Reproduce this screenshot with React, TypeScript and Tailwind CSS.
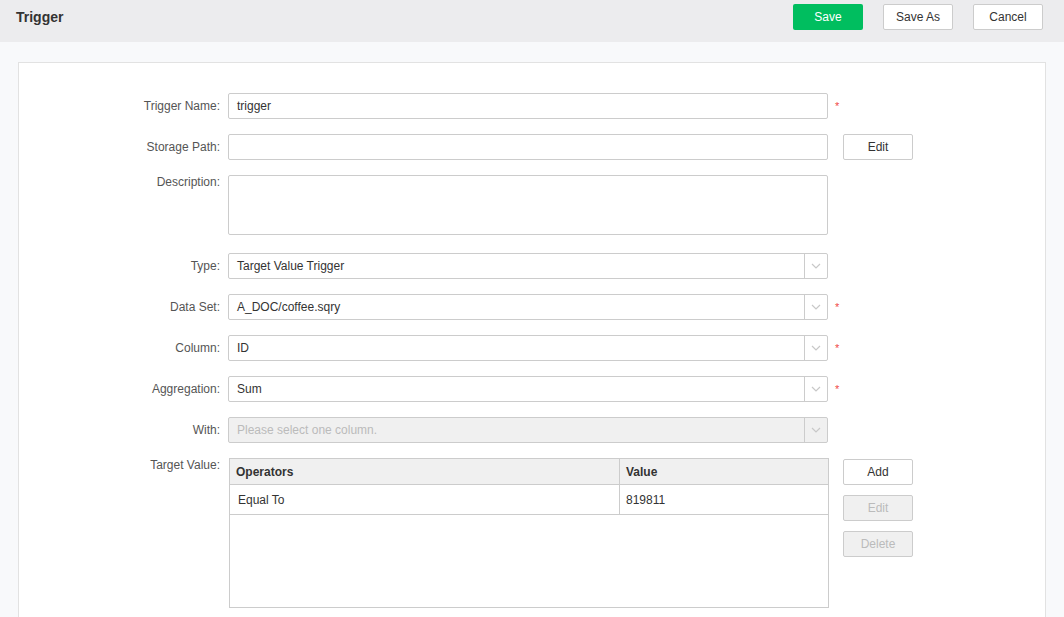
import React from 'react';

const font = { fontFamily: '"Liberation Sans", Arial, sans-serif' };

const Chevron: React.FC = () => (
  <svg width="10" height="6" viewBox="0 0 10 6" fill="none">
    <path d="M1 1l4 4 4-4" stroke="#c8c8c8" strokeWidth="1.2" />
  </svg>
);

const Required: React.FC = () => (
  <span className="ml-[7px] text-[11px] leading-none text-[#f04848]">*</span>
);

const Label: React.FC<{ text: string; top?: boolean }> = ({ text, top }) => (
  <div
    className={`w-[202px] shrink-0 pr-[1px] text-right text-[12px] text-[#555] ${
      top ? 'self-start leading-[14px]' : ''
    }`}
  >
    {text}
  </div>
);

const Select: React.FC<{ value: string; disabled?: boolean }> = ({ value, disabled }) => (
  <div
    className={`ml-[7px] flex h-[26px] w-[600px] items-center rounded-[2px] border border-[#ccc] ${
      disabled ? 'bg-[#f0f0f0]' : 'bg-white'
    }`}
  >
    <div className={`flex-1 pl-[8px] text-[12px] ${disabled ? 'text-[#bbb]' : 'text-[#333]'}`}>
      {value}
    </div>
    <div className="flex h-full w-[23px] items-center justify-center border-l border-[#ccc]">
      <Chevron />
    </div>
  </div>
);

const SideButton: React.FC<{ text: string; disabled?: boolean }> = ({ text, disabled }) => (
  <button
    className={`h-[26px] w-[70px] rounded-[2px] border border-[#ccc] text-[12px] ${
      disabled ? 'bg-[#f0f0f0] text-[#bbb]' : 'bg-white text-[#333]'
    }`}
  >
    {text}
  </button>
);

const App: React.FC = () => {
  return (
    <div className="min-h-screen bg-[#f8f9fb]" style={font}>
      {/* Top bar */}
      <div className="flex h-[42px] items-start bg-[#ececee] pl-[16px] pr-[21px] pt-[4px]">
        <h1 className="flex-1 pt-[4px] text-[14px] font-bold leading-[18px] text-[#333]">Trigger</h1>
        <div className="flex gap-[20px]">
          <button className="h-[26px] w-[70px] rounded-[2px] bg-[#00be5f] text-[12px] text-white">
            Save
          </button>
          <button className="h-[26px] w-[70px] rounded-[2px] border border-[#ccc] bg-white text-[12px] text-[#333]">
            Save As
          </button>
          <button className="h-[26px] w-[70px] rounded-[2px] border border-[#ccc] bg-white text-[12px] text-[#333]">
            Cancel
          </button>
        </div>
      </div>

      <div className="px-[18px] pt-[20px]">
        <div className="border border-[#e2e2e2] bg-white pb-[40px] pt-[30px]">
          {/* Trigger Name */}
          <div className="flex items-center">
            <Label text="Trigger Name:" />
            <div className="ml-[7px] flex h-[26px] w-[600px] items-center rounded-[2px] border border-[#ccc] pl-[8px] text-[12px] text-[#333]">
              trigger
            </div>
            <Required />
          </div>

          {/* Storage Path */}
          <div className="mt-[15px] flex items-center">
            <Label text="Storage Path:" />
            <div className="ml-[7px] h-[26px] w-[600px] rounded-[2px] border border-[#ccc]" />
            <div className="ml-[15px]">
              <SideButton text="Edit" />
            </div>
          </div>

          {/* Description */}
          <div className="mt-[15px] flex">
            <Label text="Description:" top />
            <div className="ml-[7px] h-[60px] w-[600px] rounded-[2px] border border-[#ccc]" />
          </div>

          <div className="mt-[18px] flex items-center">
            <Label text="Type:" />
            <Select value="Target Value Trigger" />
          </div>

          <div className="mt-[15px] flex items-center">
            <Label text="Data Set:" />
            <Select value="A_DOC/coffee.sqry" />
            <Required />
          </div>

          <div className="mt-[15px] flex items-center">
            <Label text="Column:" />
            <Select value="ID" />
            <Required />
          </div>

          <div className="mt-[15px] flex items-center">
            <Label text="Aggregation:" />
            <Select value="Sum" />
            <Required />
          </div>

          <div className="mt-[15px] flex items-center">
            <Label text="With:" />
            <Select value="Please select one column." disabled />
          </div>

          {/* Target Value */}
          <div className="mt-[15px] flex">
            <Label text="Target Value:" top />
            <div className="ml-[8px] h-[150px] w-[600px] border border-[#ccc]">
              <div className="flex h-[26px] border-b border-[#ccc] bg-[#f0f0f0] text-[12px] font-bold text-[#333]">
                <div className="flex w-[390px] items-center border-r border-[#ccc] pl-[6px]">Operators</div>
                <div className="flex flex-1 items-center pl-[6px]">Value</div>
              </div>
              <div className="flex h-[30px] border-b border-[#ccc] text-[12px] text-[#333]">
                <div className="flex w-[390px] items-center border-r border-[#ccc] pl-[8px]">Equal To</div>
                <div className="flex flex-1 items-center pl-[6px]">819811</div>
              </div>
            </div>
            <div className="ml-[14px] flex flex-col gap-[10px] pt-[1px]">
              <SideButton text="Add" />
              <SideButton text="Edit" disabled />
              <SideButton text="Delete" disabled />
            </div>
          </div>
        </div>
      </div>
    </div>
  );
};

export default App;
